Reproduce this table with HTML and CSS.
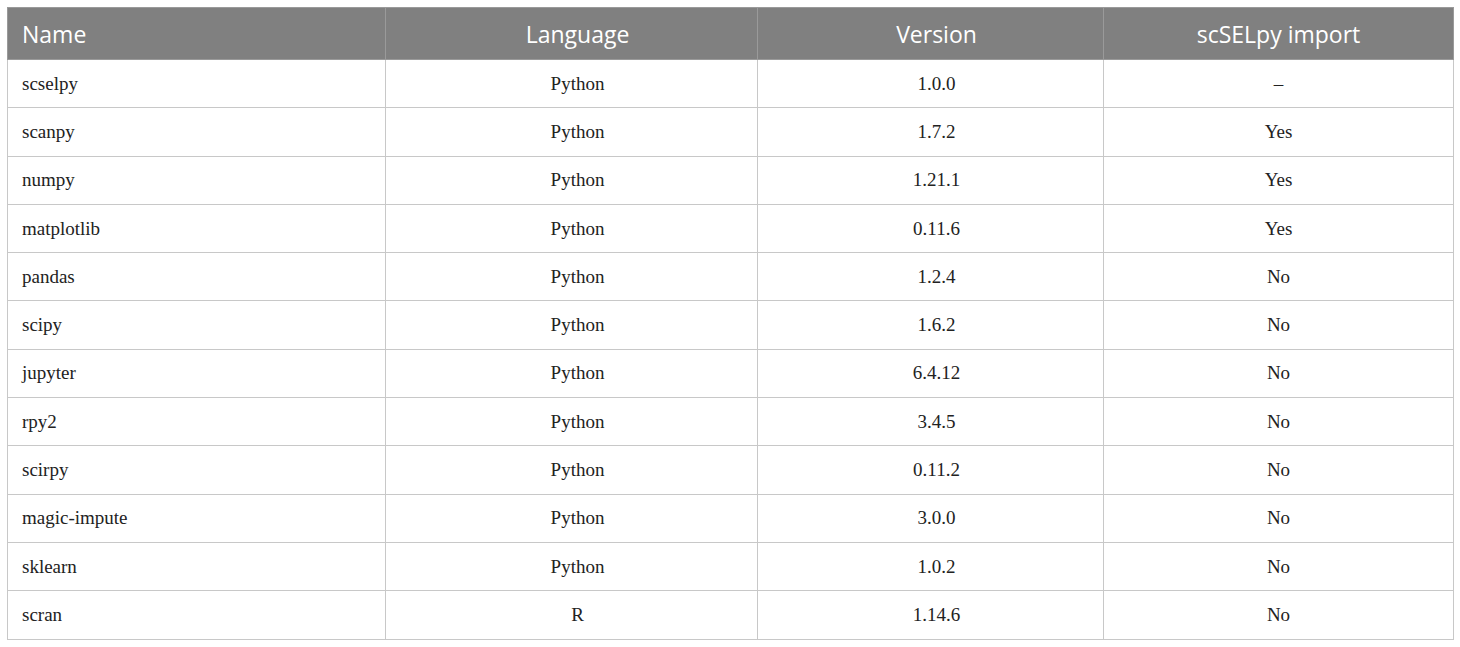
FILE: index.html
```html
<!DOCTYPE html>
<html>
<head>
<meta charset="utf-8">
<link rel="stylesheet" href="styles.css">
</head>
<body>
<table class="data">
  <colgroup>
    <col class="c1"><col class="c2"><col class="c3"><col class="c4">
  </colgroup>
  <thead>
    <tr><th class="left">Name</th><th class="shift">Language</th><th class="shift">Version</th><th>scSELpy import</th></tr>
  </thead>
  <tbody>
    <tr><td class="left">scselpy</td><td class="shift">Python</td><td class="shift">1.0.0</td><td>–</td></tr>
    <tr><td class="left">scanpy</td><td class="shift">Python</td><td class="shift">1.7.2</td><td>Yes</td></tr>
    <tr><td class="left">numpy</td><td class="shift">Python</td><td class="shift">1.21.1</td><td>Yes</td></tr>
    <tr><td class="left">matplotlib</td><td class="shift">Python</td><td class="shift">0.11.6</td><td>Yes</td></tr>
    <tr><td class="left">pandas</td><td class="shift">Python</td><td class="shift">1.2.4</td><td>No</td></tr>
    <tr><td class="left">scipy</td><td class="shift">Python</td><td class="shift">1.6.2</td><td>No</td></tr>
    <tr><td class="left">jupyter</td><td class="shift">Python</td><td class="shift">6.4.12</td><td>No</td></tr>
    <tr><td class="left">rpy2</td><td class="shift">Python</td><td class="shift">3.4.5</td><td>No</td></tr>
    <tr><td class="left">scirpy</td><td class="shift">Python</td><td class="shift">0.11.2</td><td>No</td></tr>
    <tr><td class="left">magic-impute</td><td class="shift">Python</td><td class="shift">3.0.0</td><td>No</td></tr>
    <tr><td class="left">sklearn</td><td class="shift">Python</td><td class="shift">1.0.2</td><td>No</td></tr>
    <tr><td class="left">scran</td><td class="shift">R</td><td class="shift">1.14.6</td><td>No</td></tr>
  </tbody>
</table>
</body>
</html>
```
FILE: styles.css
```css
html, body {
  margin: 0;
  padding: 0;
  background: #ffffff;
}
body {
  padding: 7px 6px 0 7px;
}
.data {
  border-collapse: collapse;
  width: 1446px;
  table-layout: fixed;
}
.c1 { width: 378px; }
.c2 { width: 372px; }
.c3 { width: 346px; }
.c4 { width: 350px; }
.data th, .data td {
  border: 1px solid #c8c8c8;
  text-align: center;
  padding: 0 14px;
}
.data th {
  background: #808080;
  color: #ffffff;
  font-family: "Open Sans", "Noto Sans", sans-serif;
  font-weight: 400;
  font-size: 23px;
  height: 51px;
  border-color: #9a9a9a;
}
.data td {
  font-family: "Liberation Serif", "DejaVu Serif", serif;
  font-size: 19px;
  color: #222222;
  height: 47.3px;
}
.data .left {
  text-align: left;
}
.data .shift {
  padding-left: 26px;
  padding-right: 14px;
}
```
